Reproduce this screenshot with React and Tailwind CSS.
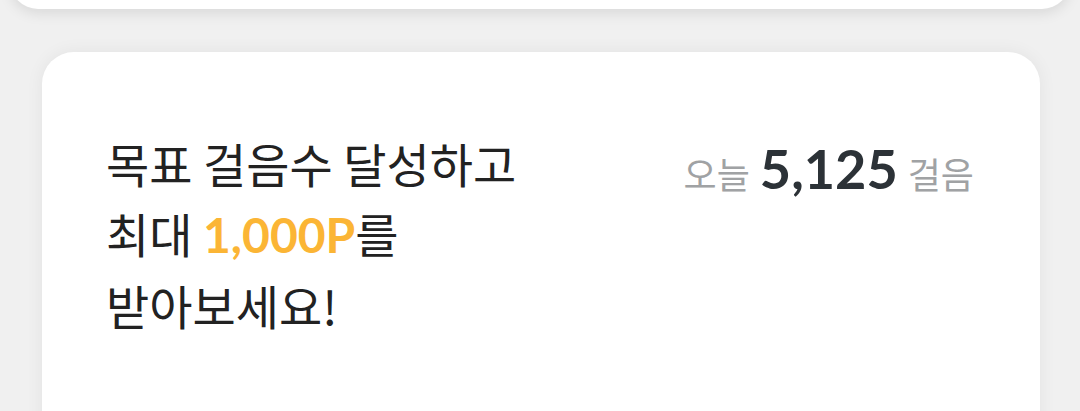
export default function App() {
  const kr = { fontFamily: '"Noto Sans CJK KR", "Noto Sans", sans-serif' };
  const lato = { fontFamily: 'Lato, "Noto Sans CJK KR", sans-serif' };
  return (
    <div className="w-[1080px] h-[411px] overflow-hidden bg-[#f0f0f0]" style={kr}>
      <div className="mx-[10px] -mt-[40px] h-[49px] rounded-b-[28px] bg-white shadow-[0_4px_14px_rgba(0,0,0,0.10)]" />
      <div className="ml-[42px] w-[998px] mt-[43px] h-[420px] rounded-[32px] bg-white shadow-[0_0_18px_rgba(0,0,0,0.06)] pl-[64px] pr-[66px] pt-[76px] flex justify-between items-start">
        <div className="text-[47px] leading-[70px] font-normal text-[#222222]">
          <div>목표 걸음수 달성하고</div>
          <div>
            최대 <span className="text-[#fbb535] font-bold text-[48px]" style={lato}>1,000P</span>를
          </div>
          <div>받아보세요!</div>
        </div>
        <div className="flex items-baseline gap-[10px] mt-[14px]">
          <span className="text-[36px] font-normal text-[#a0a2a4]">오늘</span>
          <span className="text-[54px] font-bold text-[#2c3237] leading-none" style={lato}>5,125</span>
          <span className="text-[36px] font-normal text-[#a0a2a4]">걸음</span>
        </div>
      </div>
    </div>
  );
}
